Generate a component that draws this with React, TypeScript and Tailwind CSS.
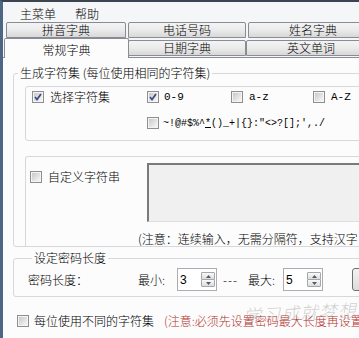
import React from "react";

function Check({ checked = false }: { checked?: boolean }) {
  return (
    <span className="relative inline-flex w-[12px] h-[12px] shrink-0 border border-[#8f8f8f] bg-[#f4f4f4] p-[1px]">
      <span className="block w-full h-full bg-linear-to-br from-[#c9c9c9] to-[#f7f7f7]"></span>
      {checked && (
        <svg className="absolute left-[1px] top-[1px]" width="8" height="8" viewBox="0 0 8 8">
          <path d="M1 4 L3 6.5 L7 1" stroke="#3b4c84" strokeWidth="1.7" fill="none" />
        </svg>
      )}
    </span>
  );
}

function Spin({ value }: { value: string }) {
  return (
    <div className="w-[40px] h-[23px] border border-[#abadb3] bg-white flex items-center">
      <span className="flex-1 pl-[2px] text-[12px] font-['Liberation_Sans',sans-serif]">{value}</span>
      <div className="mr-[1px] w-[14px] h-[15px] flex flex-col">
        <div className="h-[8px] border border-[#a7a7a7] rounded-[1px] bg-linear-to-b from-[#fafafa] to-[#dcdcdc] flex items-center justify-center">
          <svg width="5" height="3" viewBox="0 0 5 3"><path d="M0 3 L2.5 0 L5 3 Z" fill="#4f5a6e" /></svg>
        </div>
        <div className="h-[8px] -mt-[1px] border border-[#a7a7a7] rounded-[1px] bg-linear-to-b from-[#fafafa] to-[#dcdcdc] flex items-center justify-center">
          <svg width="5" height="3" viewBox="0 0 5 3"><path d="M0 0 L2.5 3 L5 0 Z" fill="#4f5a6e" /></svg>
        </div>
      </div>
    </div>
  );
}

export default function App() {
  const tabBase =
    "h-[16px] shrink-0 border border-[#898c95] rounded-t-[2px] bg-linear-to-b from-[#f4f4f4] via-[#ebebeb] to-[#d8d8d8] flex items-center justify-center leading-none";
  return (
    <div className="w-[359px] h-[338px] overflow-hidden relative bg-[#f5f6f7] border-t-2 border-t-[#3b4450] border-l-[3px] border-l-[#4b6784] text-[12px] text-black font-light font-['Noto_Sans_CJK_SC',sans-serif]">
      {/* menu bar */}
      <div className="h-[20px] flex pl-[17px] pt-[4px] leading-[16px]">
        <span>主菜单</span>
        <span className="ml-[19px]">帮助</span>
      </div>

      {/* tab row 1 */}
      <div className="h-[16px] flex pl-[3px] gap-[2px]">
        <div className={`${tabBase} w-[120px]`}>拼音字典</div>
        <div className={`${tabBase} w-[118px]`}>电话号码</div>
        <div className={`${tabBase} w-[130px]`}>姓名字典</div>
      </div>

      {/* tab row 2 */}
      <div className="h-[19px] flex items-start pl-[1px] relative z-10">
        <div className="w-[125px] h-[20px] shrink-0 border border-b-0 border-[#898c95] rounded-t-[2px] bg-[#fcfcfc] flex items-center justify-center leading-none pt-[2px]">
          常规字典
        </div>
        <div className={`${tabBase} w-[118px] mt-[2px] -ml-[1px]`}>日期字典</div>
        <div className={`${tabBase} w-[130px] mt-[2px]`}>英文单词</div>
      </div>

      {/* panel */}
      <div className="h-[300px] border-t border-[#898c95] bg-[#fcfcfc] flex flex-col">
        {/* group 1 */}
        <fieldset className="mt-[8px] ml-[10px] w-[400px] shrink-0 border border-[#d5d8dc] rounded-[3px]">
          <legend className="ml-[4px] px-[2px] leading-[14px]">生成字符集 (每位使用相同的字符集)</legend>

          {/* inner box 1 */}
          <div className="mt-[6px] ml-[11px] w-[400px] h-[55px] border border-[#d5d8dc] rounded-[3px] flex flex-col pt-[3px]">
            <div className="h-[14px] flex items-center pl-[6px]">
              <div className="w-[115px] flex items-center">
                <Check checked />
                <span className="ml-[6px] leading-[14px]">选择字符集</span>
              </div>
              <div className="w-[84px] flex items-center">
                <Check checked />
                <span className="ml-[5px] font-normal font-['Liberation_Mono',monospace] text-[11px]">0-9</span>
              </div>
              <div className="w-[82px] flex items-center">
                <Check />
                <span className="ml-[6px] font-normal font-['Liberation_Mono',monospace] text-[11px]">a-z</span>
              </div>
              <div className="flex items-center">
                <Check />
                <span className="ml-[6px] font-normal font-['Liberation_Mono',monospace] text-[11px]">A-Z</span>
              </div>
            </div>
            <div className="mt-[12px] h-[14px] flex items-center pl-[121px]">
              <Check />
              <span className="ml-[4px] font-normal font-['Liberation_Mono',monospace] text-[10px] whitespace-pre">
                {"~!@#$%^"}
                <u>*</u>
                {"()_+|{}:\"<>?[];',./"}
              </span>
            </div>
          </div>

          {/* inner box 2 */}
          <div className="mt-[15px] ml-[11px] w-[400px] h-[90px] border border-b-0 border-[#d5d8dc] rounded-t-[3px] flex flex-col pt-[6px]">
            <div className="flex items-start">
              <div className="w-[121px] shrink-0 pl-[4px] pt-[7px]">
                <div className="h-[14px] flex items-center">
                  <Check />
                  <span className="ml-[6px] leading-[14px]">自定义字符串</span>
                </div>
              </div>
              <div className="w-[260px] h-[59px] shrink-0 bg-[#f0f0f0] border-t-2 border-l-2 border-t-[#7a7a7a] border-l-[#7a7a7a] border-b border-b-[#dedede]"></div>
            </div>
            <div className="mt-[10px] pl-[112px] leading-[14px] whitespace-nowrap">
              (注意：连续输入，无需分隔符，支持汉字
            </div>
          </div>
        </fieldset>

        {/* group 2 */}
        <fieldset className="mt-[4px] ml-[10px] w-[400px] shrink-0 border border-[#d5d8dc] rounded-[3px] pl-[14px] pb-[5px]">
          <legend className="ml-[4px] px-[2px] leading-[14px]">设定密码长度</legend>
          <div className="mt-[3px] h-[23px] flex items-center">
            <span className="w-[110px] shrink-0">密码长度：</span>
            <span className="w-[39px] shrink-0">最小:</span>
            <Spin value="3" />
            <span className="ml-[6px] w-[25px] shrink-0 tracking-[1px]">---</span>
            <span className="w-[35px] shrink-0">最大:</span>
            <Spin value="5" />
            <div className="ml-[29px] w-[70px] h-[23px] shrink-0 border border-[#707070] rounded-[3px] bg-linear-to-b from-[#f2f2f2] to-[#dcdcdc]"></div>
          </div>
        </fieldset>

        {/* bottom row */}
        <div className="mt-[17px] h-[14px] flex items-center pl-[14px] whitespace-nowrap">
          <Check />
          <span className="ml-[5px] leading-[14px]">每位使用不同的字符集</span>
          <span className="ml-[10px] leading-[14px] text-[#b3302c]">(注意:必须先设置密码最大长度再设置</span>
        </div>
      </div>

      {/* watermark */}
      <div className="absolute left-[240px] top-[297px] text-[18px] italic tracking-[1px] text-[#8a8a8a]/40 -rotate-3 pointer-events-none whitespace-nowrap">
        学习成就梦想
      </div>
    </div>
  );
}
